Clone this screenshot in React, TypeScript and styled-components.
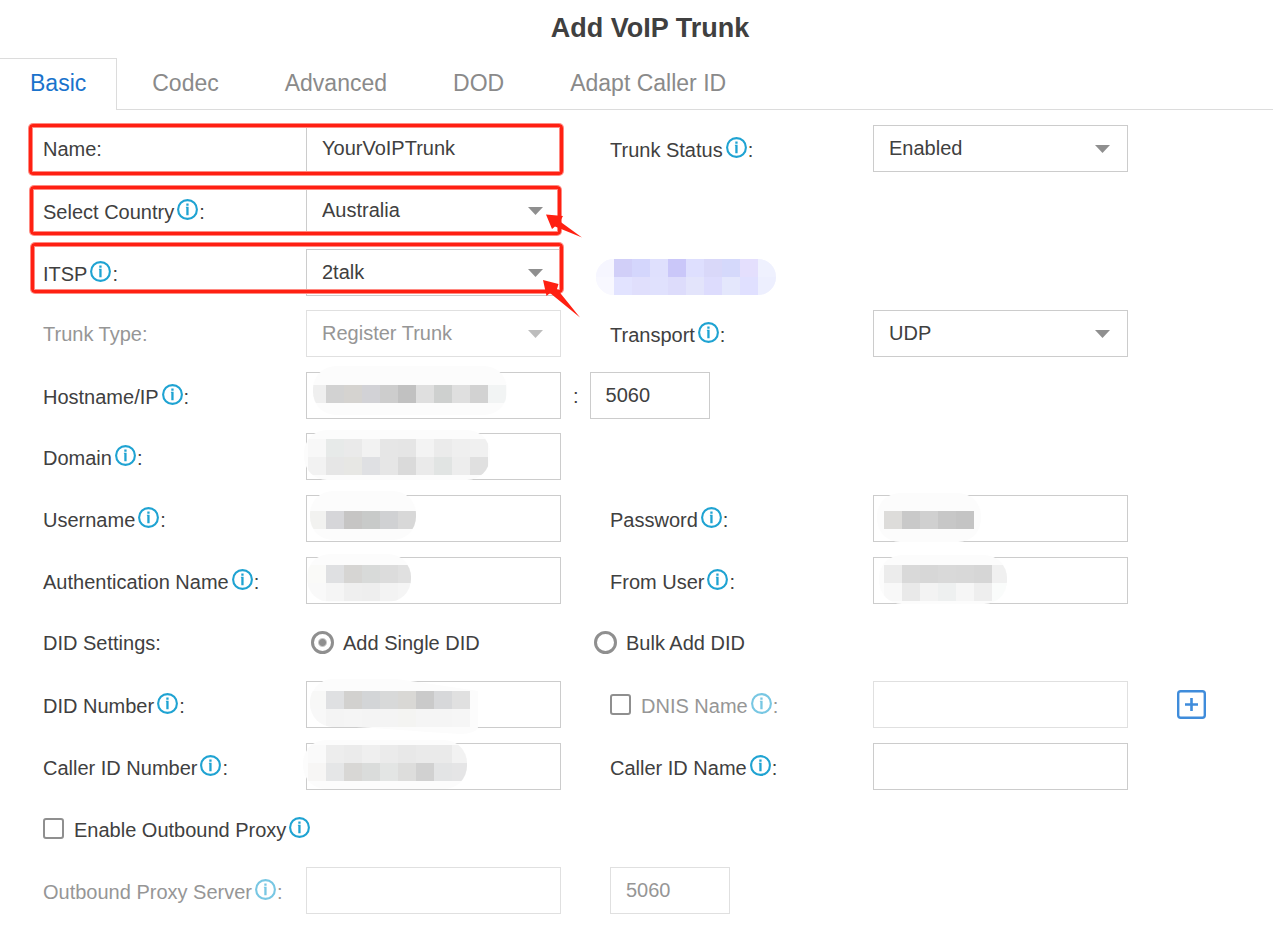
import React, { useState } from "react";
import styled, { createGlobalStyle, css } from "styled-components";

const GlobalStyle = createGlobalStyle`
  *, *::before, *::after { box-sizing: border-box; }
  body {
    margin: 0;
    background: #fff;
    color: #404040;
    font: 20px/24px "Liberation Sans", Arial, sans-serif;
  }
  button, input, select { font: inherit; color: inherit; }
`;

const Title = styled.h1`
  margin: 0;
  padding: 1px 0 3px 27px;
  font-size: 27px;
  line-height: 54px;
  font-weight: 700;
  text-align: center;
`;

const TabBar = styled.nav`
  display: flex;
  gap: 4px;
  height: 52px;
  border-bottom: 1px solid #dcdcdc;
`;

const Tab = styled.button<{ $active?: boolean }>`
  height: 51px;
  padding: 0 31px 2px;
  border: 0;
  border-top: 1px solid transparent;
  background: none;
  color: #8a8a8a;
  font-size: 23px;
  line-height: 48px;
  white-space: nowrap;
  cursor: pointer;
  ${(p) =>
    p.$active &&
    css`
      height: 52px;
      padding: 0 30px 3px;
      border-top: 1px solid #dcdcdc;
      border-right: 1px solid #dcdcdc;
      background: #fff;
      color: #1a73cc;
    `}
`;

const Form = styled.form`
  display: flex;
  flex-direction: column;
  gap: 14px;
  padding: 15px 0 15px 43px;
`;

const Section = styled.div`
  display: flex;
  flex-direction: column;
  gap: 15px;
`;

const Row = styled.div`
  position: relative;
  display: grid;
  grid-template-columns: 263fr 255fr 49fr 263fr 255fr 145fr;
  align-items: center;
  height: 47px;
`;

const LabelText = styled.label<{ $muted?: boolean }>`
  white-space: nowrap;
  color: ${(p) => (p.$muted ? "#969696" : "#404040")};
  svg { opacity: ${(p) => (p.$muted ? 0.6 : 1)}; }
`;

const SecondLabel = styled.div`
  grid-column: 4;
`;

const InfoSvg = styled.svg`
  width: 21px;
  height: 21px;
  margin: 2px 1px 0 3px;
  vertical-align: -1px;
`;

const FieldBox = styled.div`
  position: relative;
  min-width: 0;
`;

const control = css`
  display: block;
  width: 100%;
  height: 47px;
  margin: 0;
  padding: 0 15px;
  border: 1px solid #cccccc;
  border-radius: 0;
  background: #fff;
  outline: none;
  &:disabled {
    border-color: #e0e0e0;
    color: #969696;
    opacity: 1;
  }
`;

const TextInput = styled.input`
  ${control}
`;

const PortInput = styled.input`
  ${control}
  width: 120px;
`;

const SelectInput = styled.select`
  ${control}
  padding-bottom: 1px;
  appearance: none;
`;

const Arrow = styled.svg<{ $muted?: boolean }>`
  position: absolute;
  top: 20px;
  right: 18px;
  width: 15px;
  height: 8px;
  fill: ${(p) => (p.$muted ? "#bdbdbd" : "#8f8f8f")};
  pointer-events: none;
`;

const PortGroup = styled.div`
  grid-column: 3 / 5;
  display: flex;
  align-items: center;
  gap: 11px;
  padding-left: 12px;
`;

const Choice = styled.label<{ $second?: boolean }>`
  grid-column: ${(p) => (p.$second ? "3 / 5" : "2")};
  display: flex;
  align-items: center;
  gap: 9px;
  padding-left: ${(p) => (p.$second ? 33 : 5)}px;
  white-space: nowrap;
`;

const Radio = styled.input`
  appearance: none;
  width: 23px;
  height: 23px;
  margin: 0;
  border: 3px solid #8f8f8f;
  border-radius: 50%;
  background: #fff;
  &:checked {
    background: radial-gradient(circle, #8f8f8f 3px, #fff 5px);
  }
`;

const CheckLine = styled.div`
  display: flex;
  align-items: center;
  gap: 10px;
`;

const Checkbox = styled.input`
  appearance: none;
  width: 21px;
  height: 21px;
  margin: 0;
  border: 2px solid #8f8f8f;
  border-radius: 3px;
  background: #fff;
  &:checked { background: #8f8f8f; }
`;

const AddButton = styled.button`
  grid-column: 6;
  justify-self: start;
  width: 29px;
  height: 29px;
  margin-left: 49px;
  padding: 0;
  border: 0;
  background: none;
  cursor: pointer;
  svg { display: block; }
`;

const Highlight = styled.div<{ $inset: string }>`
  position: absolute;
  grid-column: 1 / 3;
  inset: ${(p) => p.$inset};
  z-index: 2;
  border: 5px solid transparent;
  pointer-events: none;
  &::before {
    content: "";
    position: absolute;
    inset: -4px;
    border: 3px solid #ff2012;
    border-radius: 4px;
    box-shadow: 0 0 0 1px #ff8a82, inset 0 0 0 1px #ff8a82;
  }
`;

const Pointer = styled.svg`
  position: absolute;
  top: 0;
  left: 100%;
  z-index: 3;
  width: 1px;
  height: 1px;
  overflow: visible;
  fill: #ff2012;
  pointer-events: none;
`;

const MosaicSvg = styled.svg`
  position: absolute;
  top: 0;
  left: 0;
  width: 1px;
  height: 1px;
  overflow: visible;
  pointer-events: none;
`;

const LinkSlot = styled.div`
  position: relative;
  grid-column: 4;
  align-self: start;
`;

function Info() {
  return (
    <InfoSvg viewBox="0 0 21 21" aria-hidden="true">
      <circle cx="10.5" cy="10.5" r="9.4" fill="none" stroke="#1fa3d2" strokeWidth="2.1" />
      <path d="M9.3 4.6h2.3v2.1H9.3zM8.9 7.8h2.7v8.4H9.3V8.8h-.4z" fill="#1fa3d2" />
    </InfoSvg>
  );
}

type LabelProps = { id: string; text: string; info?: boolean; muted?: boolean; colon?: boolean };

function Label({ id, text, info, muted, colon = true }: LabelProps) {
  return (
    <LabelText htmlFor={id} $muted={muted}>
      {text}
      {info && <Info />}
      {colon && ":"}
    </LabelText>
  );
}

type MosaicProps = {
  name: string;
  /* soft outline: left, top, right, bottom */
  blob: [number, number, number, number];
  x: number;
  y: number;
  rows: string[];
  radius?: number;
  fill?: string;
};

function Mosaic({ name, blob, x, y, rows, radius = 23, fill = "#fcfcfc" }: MosaicProps) {
  const [l, t, r, b] = blob;
  const shape = <rect x={l} y={t} width={r - l} height={b - t} rx={radius} fill={fill} />;
  return (
    <MosaicSvg aria-hidden="true">
      <clipPath id={`clip-${name}`}>{shape}</clipPath>
      {shape}
      <g clipPath={`url(#clip-${name})`}>
        {rows.map((row, j) =>
          row.split(" ").map((c, i) => (
            <rect key={`${j}-${i}`} x={x + i * 18} y={y + j * 18} width="18" height="18" fill={`#${c}`} />
          ))
        )}
      </g>
    </MosaicSvg>
  );
}

type FieldProps = { id: string; value?: string; disabled?: boolean; type?: string; children?: React.ReactNode };

function Field({ id, value = "", disabled, type = "text", children }: FieldProps) {
  return (
    <FieldBox>
      <TextInput id={id} type={type} defaultValue={value} disabled={disabled} />
      {children}
    </FieldBox>
  );
}

function Select({ id, value = "", disabled, children }: FieldProps) {
  return (
    <FieldBox>
      <SelectInput id={id} defaultValue={value} disabled={disabled}>
        <option>{value}</option>
      </SelectInput>
      <Arrow viewBox="0 0 15 8" $muted={disabled} aria-hidden="true">
        <path d="M0 0h15L7.5 8z" />
      </Arrow>
      {children}
    </FieldBox>
  );
}

const tabs = ["Basic", "Codec", "Advanced", "DOD", "Adapt Caller ID"];

export default function App() {
  const [tab, setTab] = useState("Basic");
  return (
    <main>
      <GlobalStyle />
      <Title>Add VoIP Trunk</Title>
      <TabBar>
        {tabs.map((t) => (
          <Tab key={t} type="button" $active={t === tab} onClick={() => setTab(t)}>
            {t}
          </Tab>
        ))}
      </TabBar>
      <Form>
        <Section>
          <Row>
            <Label id="name" text="Name" />
            <Field id="name" value="YourVoIPTrunk" />
            <SecondLabel><Label id="status" text="Trunk Status" info /></SecondLabel>
            <Select id="status" value="Enabled" />
            <Highlight $inset="-2px -3px -4px -15px" />
          </Row>
          <Row>
            <Label id="country" text="Select Country" info />
            <Select id="country" value="Australia">
              <Pointer aria-hidden="true">
                <path d="M-15 27.5L2 29L-1 34.5L21 50.5L-6 39.5L-9 42z" />
              </Pointer>
            </Select>
            <Highlight $inset="-2px -1px -2px -14px" />
          </Row>
          <Row>
            <Label id="itsp" text="ITSP" info />
            <Select id="itsp" value="2talk">
              <Pointer aria-hidden="true">
                <path d="M-18 31L-2.5 35L-4 40L19 68.5L-11 44L-14.500 47z" />
              </Pointer>
            </Select>
            <LinkSlot>
              <Mosaic
                name="link"
                blob={[-14, 10, 166, 46]}
                x={-14}
                y={10}
                radius={18}
                fill="#f6f6ff"
                rows={[
                  "f6f6ff d1cff8 d4d6fc dfe0fd cac7f9 dedffe d9d8f9 d5d9fb e4dffd eff1fe",
                  "f8f8ff e2e3ff e0dffc e0e1fd dddcfb e3e4fb dddcfd e4e7fc e0e0ff edeffe",
                ]}
              />
            </LinkSlot>
            <Highlight $inset="-7px -3px 2px -13px" />
          </Row>
        </Section>

        <Section>
          <Row>
            <Label id="type" text="Trunk Type" muted />
            <Select id="type" value="Register Trunk" disabled />
            <SecondLabel><Label id="transport" text="Transport" info /></SecondLabel>
            <Select id="transport" value="UDP" />
          </Row>
          <Row>
            <Label id="host" text="Hostname/IP" info />
            <Field id="host">
              <Mosaic name="host" blob={[7, -6, 201, 43]} x={2} y={13}
                rows={["efefef d2d2d2 d5d3d0 d2d2d6 cdcdcd c1c1c1 dfdfdf ced0cf dfdfdf d2d2d2 f2f4f4"]} />
            </Field>
            <PortGroup>
              <span>:</span>
              <PortInput aria-label="Port" defaultValue="5060" />
            </PortGroup>
          </Row>
        </Section>

        <Section>
          <Row>
            <Label id="domain" text="Domain" info />
            <Field id="domain">
              <Mosaic name="domain" blob={[-2, -3, 184, 47]} x={2} y={6}
                rows={[
                  "f8f8f8 e7eae9 eaeaea f2f2f2 e6e6e6 e5e5e5 f3f3f3 ebebeb efefef f0f0f0",
                  "f2f2f2 e6e6e6 e7e7e4 dfe0e3 e6e6e6 dadada eaeaea e1e4e3 ededed e0e0e0",
                ]} />
            </Field>
          </Row>
          <Row>
            <Label id="user" text="Username" info />
            <Field id="user">
              <Mosaic name="user" blob={[4, -4, 110, 45]} x={2} y={16}
                rows={["f2f2f0 d6d6d9 c6c5c4 c8cac9 d0d1d3 d8d8d8"]} />
            </Field>
            <SecondLabel><Label id="password" text="Password" info /></SecondLabel>
            <Field id="password" type="password">
              <Mosaic name="password" blob={[4, -2, 108, 47]} x={11} y={16}
                rows={["dddcda c9c9c9 d0d0d0 c7c7c7 c4c4c4"]} />
            </Field>
          </Row>
          <Row>
            <Label id="auth" text="Authentication Name" info />
            <Field id="auth">
              <Mosaic name="auth" blob={[1, -3, 105, 45]} x={2} y={8}
                rows={["fafaf8 dfe0e2 d6d5d3 d8dad9 dcdcdc e0e0e0", "f9f9f9 f5f5f5 efefef eeeeee f3f3f3 f5f5f5"]} />
            </Field>
            <SecondLabel><Label id="from" text="From User" info /></SecondLabel>
            <Field id="from">
              <Mosaic name="from" blob={[6, -2, 134, 47]} x={11} y={8}
                rows={[
                  "ececec d9d9d9 d7d7d7 d9d9d9 d8d8d8 d6d6d6 f0f0f0",
                  "f8f8f8 e9e9e9 f3f3f3 eef0f0 f6f6f6 eeeeee fafcfb",
                ]} />
            </Field>
          </Row>
          <Row role="radiogroup" aria-label="DID Settings">
            <span>DID Settings:</span>
            <Choice>
              <Radio type="radio" name="did" defaultChecked />
              Add Single DID
            </Choice>
            <Choice $second>
              <Radio type="radio" name="did" />
              Bulk Add DID
            </Choice>
          </Row>
          <Row>
            <Label id="did-number" text="DID Number" info />
            <Field id="did-number">
              <MosaicSvg aria-hidden="true">
                <path d="M26-2H90C120 2 145 6 172 10V46C172 50 164 53 154 53 110 51 70 46 26 45 14 44 4 34 4 22S14-2 26-2z" fill="#fcfcfc" />
              </MosaicSvg>
              <Mosaic name="did" blob={[4, -2, 188, 46]} x={2} y={10} fill="transparent"
                rows={[
                  "f8f8f7 dfe0e2 d2d1cf d3d5d7 d8d9d9 d9d8d5 cacaca d7d8da e0e0e0",
                  "f8f8f8 f4f4f4 f5f5f5 f4f4f4 f4f4f4 f4f4f2 f5f5f5 f5f5f5 f6f6f6",
                ]} />
            </Field>
            <SecondLabel>
              <CheckLine>
                <Checkbox type="checkbox" aria-label="Use DNIS Name" />
                <Label id="dnis" text="DNIS Name" info muted />
              </CheckLine>
            </SecondLabel>
            <Field id="dnis" disabled />
            <AddButton type="button" aria-label="Add DID">
              <svg width="29" height="29" viewBox="0 0 29 29" fill="none" stroke="#3f8cdb">
                <rect x="1.2" y="1.2" width="26.6" height="26.6" rx="2.5" strokeWidth="2.4" />
                <path d="M14.5 8v13M8 14.5h13" strokeWidth="2.6" />
              </svg>
            </AddButton>
          </Row>
          <Row>
            <Label id="cid-number" text="Caller ID Number" info />
            <Field id="cid-number">
              <Mosaic name="cid" blob={[-3, -3, 161, 46]} x={2} y={2}
                rows={[
                  "fafafa ededed ebebeb efefef ebebeb e8e8e8 eaeaea eaeaea f2f2f2",
                  "f7f6f5 e5e6e7 d8d7d5 dadcdb e3e5e4 dddddc d1d1d1 e3e4e5 e5e5e6",
                ]} />
            </Field>
            <SecondLabel><Label id="cid-name" text="Caller ID Name" info /></SecondLabel>
            <Field id="cid-name" />
          </Row>
          <Row>
            <CheckLine>
              <Checkbox type="checkbox" id="proxy" />
              <Label id="proxy" text="Enable Outbound Proxy" info colon={false} />
            </CheckLine>
          </Row>
          <Row>
            <Label id="proxy-server" text="Outbound Proxy Server" info muted />
            <Field id="proxy-server" disabled />
            <SecondLabel>
              <PortInput aria-label="Outbound proxy port" defaultValue="5060" disabled />
            </SecondLabel>
          </Row>
        </Section>
      </Form>
    </main>
  );
}
